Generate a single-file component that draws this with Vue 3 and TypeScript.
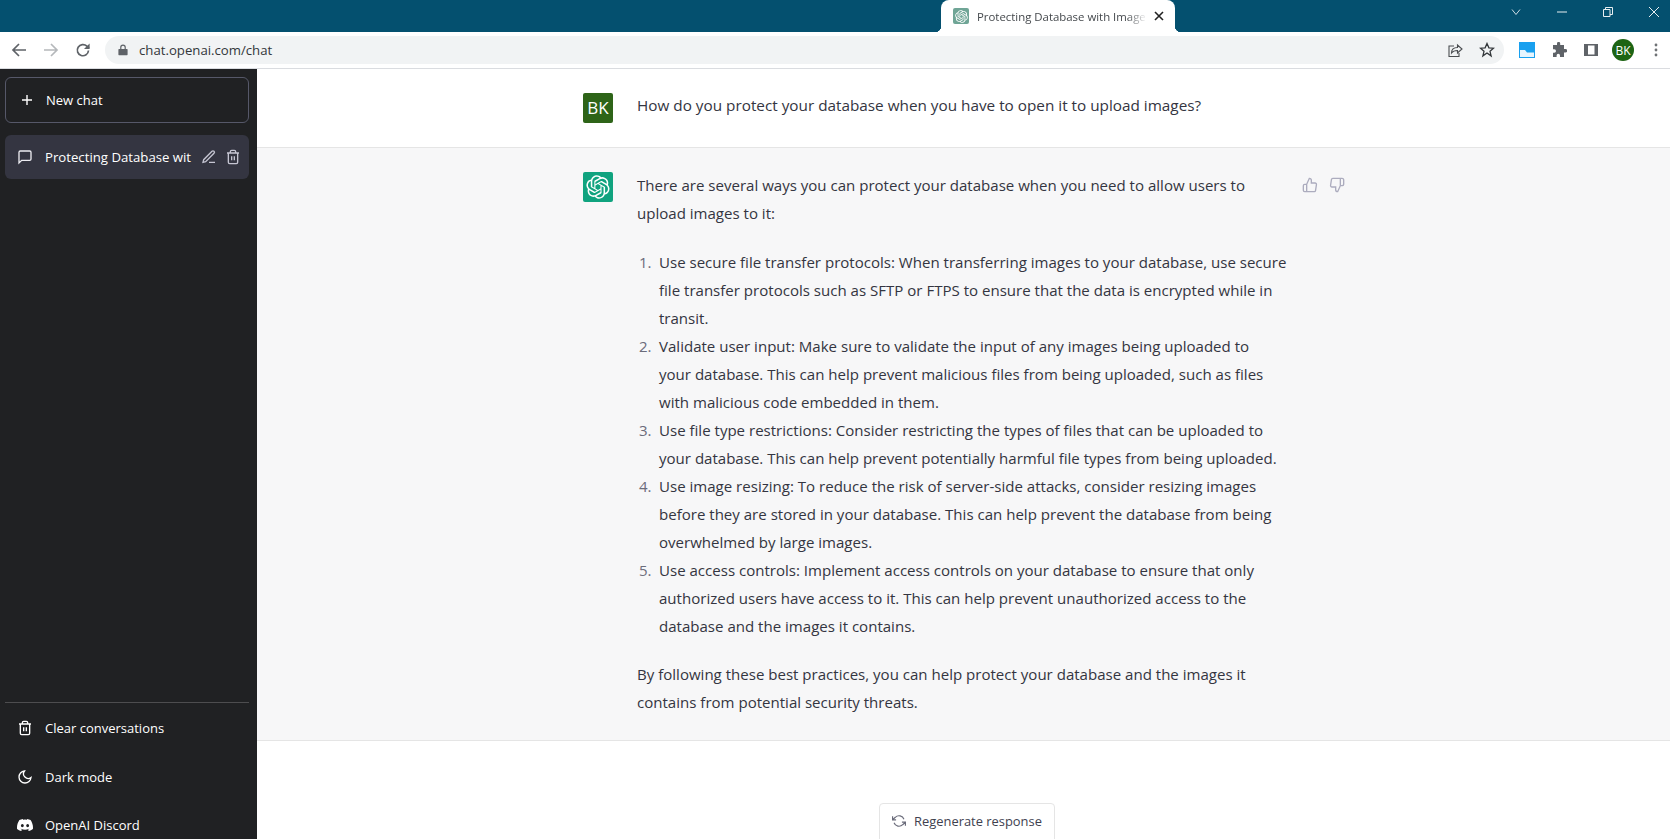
<script setup lang="ts">
const logo = "M37.5324 16.8707C37.9808 15.5241 38.1363 14.0974 37.9886 12.6859C37.8409 11.2744 37.3934 9.91076 36.676 8.68622C35.6126 6.83404 33.9882 5.3676 32.0373 4.4985C30.0864 3.62941 27.9098 3.40259 25.8215 3.85078C24.8796 2.7893 23.7219 1.94125 22.4257 1.36341C21.1295 0.785575 19.7249 0.491269 18.3058 0.500197C16.1708 0.495044 14.0893 1.16803 12.3614 2.42214C10.6335 3.67624 9.34853 5.44666 8.6917 7.47815C7.30085 7.76286 5.98686 8.3414 4.8377 9.17505C3.68854 10.0087 2.73073 11.0782 2.02839 12.312C0.956464 14.1591 0.498905 16.2988 0.721698 18.4228C0.944492 20.5467 1.83612 22.5449 3.268 24.1293C2.81966 25.4759 2.66413 26.9026 2.81182 28.3141C2.95951 29.7256 3.40701 31.0892 4.12437 32.3138C5.18791 34.1659 6.8123 35.6322 8.76321 36.5013C10.7141 37.3704 12.8907 37.5973 14.9789 37.1492C15.9208 38.2107 17.0786 39.0587 18.3747 39.6366C19.6709 40.2144 21.0755 40.5087 22.4946 40.4998C24.6307 40.5054 26.7133 39.8321 28.4418 38.5772C30.1704 37.3223 31.4556 35.5506 32.1119 33.5179C33.5027 33.2332 34.8167 32.6547 35.9659 31.821C37.115 30.9874 38.0728 29.9178 38.7752 28.684C39.8458 26.8371 40.3023 24.6979 40.0789 22.5748C39.8556 20.4517 38.9639 18.4544 37.5324 16.8707ZM22.4978 37.8849C20.7443 37.8874 19.0459 37.2733 17.6994 36.1501C17.7601 36.117 17.8666 36.0586 17.936 36.0161L25.9004 31.4156C26.1003 31.3019 26.2663 31.137 26.3813 30.9378C26.4964 30.7386 26.5563 30.5124 26.5549 30.2825V19.0542L29.9213 20.998C29.9389 21.0068 29.9541 21.0198 29.9656 21.0359C29.977 21.052 29.9842 21.0707 29.9867 21.0902V30.3889C29.9842 32.375 29.1946 34.2791 27.7909 35.6841C26.3872 37.0892 24.4838 37.8806 22.4978 37.8849ZM6.39227 31.0064C5.51397 29.4888 5.19742 27.7107 5.49804 25.9832C5.55718 26.0187 5.66048 26.0818 5.73461 26.1244L13.699 30.7248C13.8975 30.8408 14.1233 30.902 14.3532 30.902C14.583 30.902 14.8088 30.8408 15.0073 30.7248L24.731 25.1103V28.9979C24.7321 29.0177 24.7283 29.0376 24.7199 29.0556C24.7115 29.0736 24.6988 29.0893 24.6829 29.1012L16.6317 33.7497C14.9096 34.7416 12.8643 35.0097 10.9447 34.4954C9.02506 33.9811 7.38785 32.7263 6.39227 31.0064ZM4.29707 13.6194C5.17156 12.0998 6.55279 10.9364 8.19885 10.3327C8.19885 10.4013 8.19491 10.5228 8.19491 10.6071V19.808C8.19351 20.0378 8.25334 20.2638 8.36823 20.4629C8.48312 20.6619 8.64893 20.8267 8.84863 20.9404L18.5723 26.5542L15.206 28.4979C15.1894 28.5089 15.1703 28.5155 15.1505 28.5173C15.1307 28.5191 15.1107 28.516 15.0924 28.5082L7.04046 23.8557C5.32135 22.8601 4.06716 21.2235 3.55289 19.3046C3.03862 17.3858 3.30624 15.3413 4.29707 13.6194ZM31.955 20.0556L22.2312 14.4411L25.5976 12.4981C25.6142 12.4872 25.6333 12.4805 25.6531 12.4787C25.6729 12.4769 25.6928 12.4801 25.7111 12.4879L33.7631 17.1364C34.9967 17.849 36.0017 18.8982 36.6606 20.1613C37.3194 21.4244 37.6047 22.849 37.4832 24.2684C37.3617 25.6878 36.8382 27.0432 35.9743 28.1759C35.1103 29.3086 33.9415 30.1717 32.6047 30.6641C32.6047 30.5947 32.6047 30.4733 32.6047 30.3889V21.188C32.6066 20.9586 32.5474 20.7328 32.4332 20.5338C32.319 20.3348 32.154 20.1698 31.955 20.0556ZM35.3055 15.0128C35.2464 14.9765 35.1431 14.9142 35.069 14.8717L27.1045 10.2712C26.906 10.1554 26.6803 10.0943 26.4504 10.0943C26.2206 10.0943 25.9948 10.1554 25.7963 10.2712L16.0726 15.8858V11.9982C16.0715 11.9783 16.0753 11.9585 16.0837 11.9405C16.0921 11.9225 16.1048 11.9068 16.1207 11.8949L24.1719 7.25025C25.4053 6.53903 26.8158 6.19376 28.2383 6.25482C29.6608 6.31589 31.0364 6.78077 32.2044 7.59508C33.3723 8.40939 34.2842 9.53945 34.8334 10.8531C35.3826 12.1667 35.5464 13.6095 35.3055 15.0128ZM14.2424 21.9419L10.8752 19.9981C10.8576 19.9893 10.8423 19.9763 10.8309 19.9602C10.8195 19.9441 10.8122 19.9254 10.8098 19.9058V10.6071C10.8107 9.18295 11.2173 7.78848 11.9819 6.58696C12.7466 5.38544 13.8377 4.42659 15.1275 3.82264C16.4173 3.21869 17.8524 2.99464 19.2649 3.1767C20.6775 3.35876 22.0089 3.93941 23.1034 4.85067C23.0427 4.88379 22.937 4.94215 22.8668 4.98473L14.9024 9.58517C14.7025 9.69878 14.5366 9.86356 14.4215 10.0626C14.3065 10.2616 14.2466 10.4877 14.2479 10.7175L14.2424 21.9419ZM16.071 17.9991L20.4018 15.4978L24.7325 17.9975V22.9985L20.4018 25.4983L16.071 22.9985V17.9991Z";
const discord = "M13.545 2.907a13.227 13.227 0 0 0-3.257-1.011.05.05 0 0 0-.052.025c-.141.25-.297.577-.406.833a12.19 12.19 0 0 0-3.658 0 8.258 8.258 0 0 0-.412-.833.051.051 0 0 0-.052-.025c-1.125.194-2.22.534-3.257 1.011a.041.041 0 0 0-.021.018C.356 6.024-.213 9.047.066 12.032c.001.014.01.028.021.037a13.276 13.276 0 0 0 3.995 2.02.05.05 0 0 0 .056-.019c.308-.42.582-.863.818-1.329a.05.05 0 0 0-.01-.059.051.051 0 0 0-.018-.011 8.875 8.875 0 0 1-1.248-.595.05.05 0 0 1-.02-.066.051.051 0 0 1 .015-.019c.084-.063.168-.129.248-.195a.05.05 0 0 1 .051-.007c2.619 1.196 5.454 1.196 8.041 0a.052.052 0 0 1 .053.007c.08.066.164.132.248.195a.051.051 0 0 1-.004.085 8.254 8.254 0 0 1-1.249.594.05.05 0 0 0-.03.03.052.052 0 0 0 .003.041c.24.465.515.909.817 1.329a.05.05 0 0 0 .056.019 13.235 13.235 0 0 0 4.001-2.02.049.049 0 0 0 .021-.037c.334-3.451-.559-6.449-2.366-9.106a.034.034 0 0 0-.02-.019Zm-8.198 7.307c-.789 0-1.438-.724-1.438-1.612 0-.889.637-1.613 1.438-1.613.807 0 1.45.73 1.438 1.613 0 .888-.637 1.612-1.438 1.612Zm5.316 0c-.788 0-1.438-.724-1.438-1.612 0-.889.637-1.613 1.438-1.613.807 0 1.451.73 1.438 1.613 0 .888-.631 1.612-1.438 1.612Z";

const items: string[][] = [
  ["Use secure file transfer protocols: When transferring images to your database, use secure", "file transfer protocols such as SFTP or FTPS to ensure that the data is encrypted while in", "transit."],
  ["Validate user input: Make sure to validate the input of any images being uploaded to", "your database. This can help prevent malicious files from being uploaded, such as files", "with malicious code embedded in them."],
  ["Use file type restrictions: Consider restricting the types of files that can be uploaded to", "your database. This can help prevent potentially harmful file types from being uploaded."],
  ["Use image resizing: To reduce the risk of server-side attacks, consider resizing images", "before they are stored in your database. This can help prevent the database from being", "overwhelmed by large images."],
  ["Use access controls: Implement access controls on your database to ensure that only", "authorized users have access to it. This can help prevent unauthorized access to the", "database and the images it contains."],
];
</script>

<template>
  <div class="page">
    <header class="tabstrip">
      <div class="tab">
        <span class="favicon"><svg viewBox="0 0 41 41" width="13" height="13"><path :d="logo" fill="#fff" /></svg></span>
        <span class="tabtitle">Protecting Database with Image</span>
        <svg class="tabclose" viewBox="0 0 10 10" width="10" height="10"><path d="M1 1l8 8M9 1L1 9" stroke="#222" stroke-width="1.6" /></svg>
      </div>
      <div class="winctl">
        <svg viewBox="0 0 12 12" width="12" height="12"><path d="M2 3.5l4 5 4-5" fill="none" stroke="#cfdde4" stroke-width="1" /></svg>
        <svg viewBox="0 0 12 12" width="12" height="12"><path d="M1 6h10" stroke="#e8eef1" stroke-width="1" /></svg>
        <svg viewBox="0 0 12 12" width="12" height="12"><path d="M1.5 3.5h6.5v7H1.5zM3.5 3.5V1.5H10.5v7H8" fill="none" stroke="#e8eef1" stroke-width="1" /></svg>
        <svg viewBox="0 0 12 12" width="12" height="12"><path d="M1 1l10 10M11 1L1 11" stroke="#e8eef1" stroke-width="1" /></svg>
      </div>
    </header>

    <div class="toolbar">
      <svg class="navbtn" viewBox="0 0 16 16" width="16" height="16"><path d="M15 8H2M8 2L2 8l6 6" fill="none" stroke="#5f6368" stroke-width="1.7" /></svg>
      <svg class="navbtn" viewBox="0 0 16 16" width="16" height="16"><path d="M1 8h13M8 2l6 6-6 6" fill="none" stroke="#b5b8bb" stroke-width="1.7" /></svg>
      <svg class="navbtn" viewBox="0 0 16 16" width="16" height="16"><path d="M13.5 8.5a5.6 5.6 0 1 1-1.6-4.3L14 6.2" fill="none" stroke="#5f6368" stroke-width="1.7" /><path d="M14.6 1.5v5.6H9z" fill="#5f6368" /></svg>
      <div class="omnibox">
        <svg viewBox="0 0 10 12" width="10" height="12"><path d="M1 5h8a.6.6 0 0 1 .6.6v5a.6.6 0 0 1-.6.6H1a.6.6 0 0 1-.6-.6v-5A.6.6 0 0 1 1 5z" fill="#5f6368" /><path d="M2.8 5V3.3a2.2 2.2 0 0 1 4.4 0V5" fill="none" stroke="#5f6368" stroke-width="1.2" /></svg>
        <span class="url">chat.openai.com/chat</span>
        <svg class="ombtn1" viewBox="0 0 16 16" width="16" height="16"><path d="M7 4H2v10.500h10V11" fill="none" stroke="#4a4d50" stroke-width="1.100" /><path d="M4.500 11c0-4 3-5.500 6-5.500V3l4.500 4-4.500 4V8.500C7.500 8.500 6 9 4.500 11z" fill="none" stroke="#4a4d50" stroke-width="1.100" /></svg>
        <svg class="ombtn2" viewBox="0 0 16 16" width="16" height="16"><path d="M8 1.500l1.900 4.300 4.600.4-3.500 3.100 1.100 4.600L8 11l-4.100 2.900 1.100-4.600-3.500-3.100 4.600-.4z" fill="none" stroke="#33373a" stroke-width="1.300" /></svg>
      </div>
      <div class="ext">
        <svg viewBox="0 0 16 16" width="16" height="16"><path d="M0 0h16v16H0z" fill="#19a0ef" /><path d="M1 8h5l2 2.500h7V15H1z" fill="#e6f5fe" /></svg>
        <svg class="puzzle" viewBox="0 0 16 16" width="16" height="16"><path d="M6 1.500a1.600 1.600 0 0 1 3.200 0V3H13v4h1.500a1.700 1.700 0 0 1 0 3.400H13V15H9v-1.500a1.700 1.700 0 0 0-3.400 0V15H2v-4.300h1.300a1.700 1.700 0 0 0 0-3.400H2V3h4z" fill="#5f6368" /></svg>
        <svg class="panel" viewBox="0 0 16 16" width="16" height="16"><path d="M1 2h14v12H1z" fill="#5f6368" /><path d="M5 3.500h6.500v9H5z" fill="#fff" /></svg>
        <span class="profile">BK</span>
        <svg class="dots" viewBox="0 0 4 16" width="4" height="16"><circle cx="2" cy="3" r="1.400" fill="#6f7275" /><circle cx="2" cy="8" r="1.400" fill="#6f7275" /><circle cx="2" cy="13" r="1.400" fill="#6f7275" /></svg>
      </div>
    </div>

    <div class="body">
      <aside class="sidebar">
        <div class="newchat">
          <svg viewBox="0 0 16 16" width="16" height="16"><path d="M8 3v10M3 8h10" stroke="#fff" stroke-width="1.400" /></svg>
          <span>New chat</span>
        </div>
        <div class="convo">
          <svg viewBox="0 0 24 24" width="16" height="16"><path d="M21 15a2 2 0 0 1-2 2H7l-4 4V5a2 2 0 0 1 2-2h14a2 2 0 0 1 2 2z" fill="none" stroke="#ececf1" stroke-width="2" /></svg>
          <span class="convotitle">Protecting Database wit</span>
          <svg class="ca" viewBox="0 0 24 24" width="16" height="16"><path d="M12 20h9M16.500 3.500a2.120 2.120 0 0 1 3 3L7 19l-4 1 1-4z" fill="none" stroke="#c5c5d2" stroke-width="2" /></svg>
          <svg class="cb" viewBox="0 0 24 24" width="16" height="16"><path d="M3 6h18M19 6v14a2 2 0 0 1-2 2H7a2 2 0 0 1-2-2V6m3 0V4a2 2 0 0 1 2-2h4a2 2 0 0 1 2 2v2M10 11v6M14 11v6" fill="none" stroke="#c5c5d2" stroke-width="2" /></svg>
        </div>
        <div class="sidefoot">
          <div class="sideitem first">
            <svg viewBox="0 0 24 24" width="16" height="16"><path d="M3 6h18M19 6v14a2 2 0 0 1-2 2H7a2 2 0 0 1-2-2V6m3 0V4a2 2 0 0 1 2-2h4a2 2 0 0 1 2 2v2M10 11v6M14 11v6" fill="none" stroke="#fff" stroke-width="2" /></svg>
            <span>Clear conversations</span>
          </div>
          <div class="sideitem">
            <svg viewBox="0 0 24 24" width="16" height="16"><path d="M21 12.790A9 9 0 1 1 11.210 3 7 7 0 0 0 21 12.790z" fill="none" stroke="#fff" stroke-width="2" /></svg>
            <span>Dark mode</span>
          </div>
          <div class="sideitem">
            <svg viewBox="0 0 16 16" width="16" height="16"><path :d="discord" fill="#fff" /></svg>
            <span>OpenAI Discord</span>
          </div>
        </div>
      </aside>

      <main class="main">
        <section class="msg user">
          <span class="avatar bk">BK</span>
          <p class="question">How do you protect your database when you have to open it to upload images?</p>
        </section>
        <section class="msg ai">
          <span class="avatar gpt"><svg viewBox="0 0 41 41" width="24" height="24"><path :d="logo" fill="#fff" /></svg></span>
          <div class="answer">
            <p>There are several ways you can protect your database when you need to allow users to<br />upload images to it:</p>
            <ol>
              <li v-for="(item, i) in items" :key="i">
                <span class="num">{{ i + 1 }}.</span>
                <span class="lines"><span v-for="line in item" :key="line" class="ln">{{ line }}</span></span>
              </li>
            </ol>
            <p>By following these best practices, you can help protect your database and the images it<br />contains from potential security threats.</p>
          </div>
          <div class="thumbs">
            <svg viewBox="0 0 24 24" width="16" height="16"><path d="M14 9V5a3 3 0 0 0-3-3l-4 9v11h11.280a2 2 0 0 0 2-1.700l1.380-9a2 2 0 0 0-2-2.300zM7 22H4a2 2 0 0 1-2-2v-7a2 2 0 0 1 2-2h3" fill="none" stroke="#acacbe" stroke-width="2" /></svg>
            <svg viewBox="0 0 24 24" width="16" height="16"><path d="M10 15v4a3 3 0 0 0 3 3l4-9V2H5.720a2 2 0 0 0-2 1.700l-1.380 9a2 2 0 0 0 2 2.300zM17 2h2.670A2.310 2.310 0 0 1 22 4v7a2.310 2.310 0 0 1-2.330 2H17" fill="none" stroke="#acacbe" stroke-width="2" /></svg>
          </div>
        </section>
        <div class="regen">
          <button class="regenbtn" type="button">
            <svg viewBox="0 0 24 24" width="14" height="14"><path d="M1 4v6h6M23 20v-6h-6M20.490 9A9 9 0 0 0 5.640 5.640L1 10m22 4l-4.640 4.360A9 9 0 0 1 3.510 15" fill="none" stroke="#6b6c7b" stroke-width="2" /></svg>
            <span>Regenerate response</span>
          </button>
        </div>
      </main>
    </div>
  </div>
</template>

<style>
html, body { margin: 0; overflow: hidden; background: #fff; }
</style>

<style scoped>
.page {
  width: 1670px;
  height: 839px;
  overflow: hidden;
  display: flex;
  flex-direction: column;
  font-family: "Open Sans", "Noto Sans", sans-serif;
}
.tabstrip {
  height: 32px;
  flex: none;
  background: #04506f;
  display: flex;
  padding-left: 941px;
}
.tab {
  position: relative;
  width: 234px;
  height: 32px;
  background: #fff;
  border-radius: 8px 8px 0 0;
  display: flex;
  align-items: center;
  padding-left: 12px;
  box-sizing: border-box;
}
.tab::before,
.tab::after {
  content: "";
  position: absolute;
  bottom: 0;
  width: 6px;
  height: 6px;
}
.tab::before {
  left: -6px;
  background: radial-gradient(circle at 0 0, transparent 6px, #fff 6.5px);
}
.tab::after {
  right: -6px;
  background: radial-gradient(circle at 100% 0, transparent 6px, #fff 6.5px);
}
.favicon {
  width: 16px;
  height: 16px;
  flex: none;
  background: #6fa596;
  border-radius: 2px;
  display: flex;
  align-items: center;
  justify-content: center;
}
.tabtitle {
  margin-left: 8px;
  flex: 0 0 170px;
  white-space: nowrap;
  overflow: hidden;
  font-size: 11.400px;
  color: #45494d;
  -webkit-mask-image: linear-gradient(to right, #000 88%, transparent);
  mask-image: linear-gradient(to right, #000 88%, transparent);
}
.tabclose { margin-left: 7px; }
.winctl {
  margin-left: auto;
  display: flex;
  align-items: center;
  gap: 34px;
  padding: 0 10px 8px 0;
  height: 24px;
}
.toolbar {
  height: 36px;
  flex: none;
  background: #fff;
  display: flex;
  align-items: center;
  padding-left: 11px;
  border-bottom: 1px solid #dadce0;
}
.navbtn { margin-right: 16px; }
.navbtn:nth-child(3) { margin-right: 14px; }
.omnibox {
  width: 1399px;
  height: 28px;
  background: #f1f3f4;
  border-radius: 14px;
  display: flex;
  align-items: center;
  padding-left: 13px;
  box-sizing: border-box;
}
.url {
  margin-left: 11px;
  font-size: 13.200px;
  color: #33373a;
}
.ombtn1 { margin-left: auto; }
.ombtn2 { margin: 0 9px 0 16px; }
.ext {
  display: flex;
  align-items: center;
  margin-left: 15px;
}
.puzzle { margin-left: 16px; }
.panel { margin-left: 16px; }
.profile {
  width: 22px;
  height: 22px;
  border-radius: 50%;
  background: #1d6414;
  color: #fff;
  font-size: 12px;
  display: flex;
  align-items: center;
  justify-content: center;
  margin-left: 13px;
}
.dots { margin-left: 20px; }
.body {
  flex: 1;
  min-height: 0;
  display: flex;
}
.sidebar {
  width: 257px;
  flex: none;
  background: #202123;
  display: flex;
  flex-direction: column;
  padding: 8px 8px 0 5px;
  box-sizing: border-box;
  color: #fff;
  font-size: 13px;
}
.newchat {
  height: 46px;
  border: 1px solid #565869;
  border-radius: 6px;
  display: flex;
  align-items: center;
  padding-left: 13px;
  gap: 11px;
  box-sizing: border-box;
}
.convo {
  margin-top: 12px;
  height: 44px;
  background: #343541;
  border-radius: 6px;
  display: flex;
  align-items: center;
  padding-left: 12px;
  box-sizing: border-box;
}
.convotitle {
  margin-left: 12px;
  width: 148px;
  overflow: hidden;
  white-space: nowrap;
  font-size: 13.200px;
}
.ca { margin-left: 8px; }
.cb { margin-left: 8px; }
.sidefoot {
  margin-top: auto;
  margin-bottom: -10px;
  border-top: 1px solid #4d4d4f;
}
.sideitem {
  height: 48px;
  display: flex;
  align-items: center;
  padding-left: 12px;
  gap: 12px;
}
.sideitem.first { height: 50px; }
.main {
  flex: 1;
  min-width: 0;
  display: flex;
  flex-direction: column;
  background: #fff;
  color: #343541;
}
.msg {
  display: flex;
  flex: none;
  padding-left: 326px;
  box-sizing: border-box;
  font-size: 15.050px;
  line-height: 28px;
}
.user {
  height: 79px;
  padding-top: 24px;
  border-bottom: 1px solid #e5e5e5;
}
.ai {
  height: 593px;
  padding-top: 24px;
  background: #f7f7f8;
  border-bottom: 1px solid #e5e5e5;
}
.avatar {
  width: 30px;
  height: 30px;
  flex: none;
  border-radius: 2px;
  display: flex;
  align-items: center;
  justify-content: center;
  color: #fff;
}
.bk { background: #2e6418; font-size: 17px; }
.gpt { background: #10a37f; }
.question {
  margin: -2px 0 0 24px;
  font-size: 15.300px;
}
.answer {
  margin-left: 24px;
  width: 653px;
  flex: none;
  margin-top: -1px;
}
.answer p { margin: 0; }
.answer ol {
  margin: 21px 0 20px;
  padding: 0 0 0 2px;
  list-style: none;
}
.answer li { display: flex; }
.num {
  flex: 0 0 20px;
  color: #6b6c7b;
}
.lines { display: block; }
.ln { display: block; white-space: nowrap; }
.thumbs {
  display: flex;
  gap: 11px;
  margin-left: 12px;
  height: 24px;
  align-items: flex-start;
  padding-top: 5px;
}
.regen {
  flex: 1;
  min-height: 0;
  display: flex;
  justify-content: center;
  padding: 62px 0 0 7px;
}
.regenbtn {
  width: 176px;
  height: 44px;
  flex: none;
  background: #fff;
  border: 1px solid #e5e5e5;
  border-radius: 4px;
  display: flex;
  align-items: center;
  justify-content: center;
  gap: 8px;
  font-family: inherit;
  font-size: 12.900px;
  color: #40414f;
  padding: 0 0 8px;
}
</style>
